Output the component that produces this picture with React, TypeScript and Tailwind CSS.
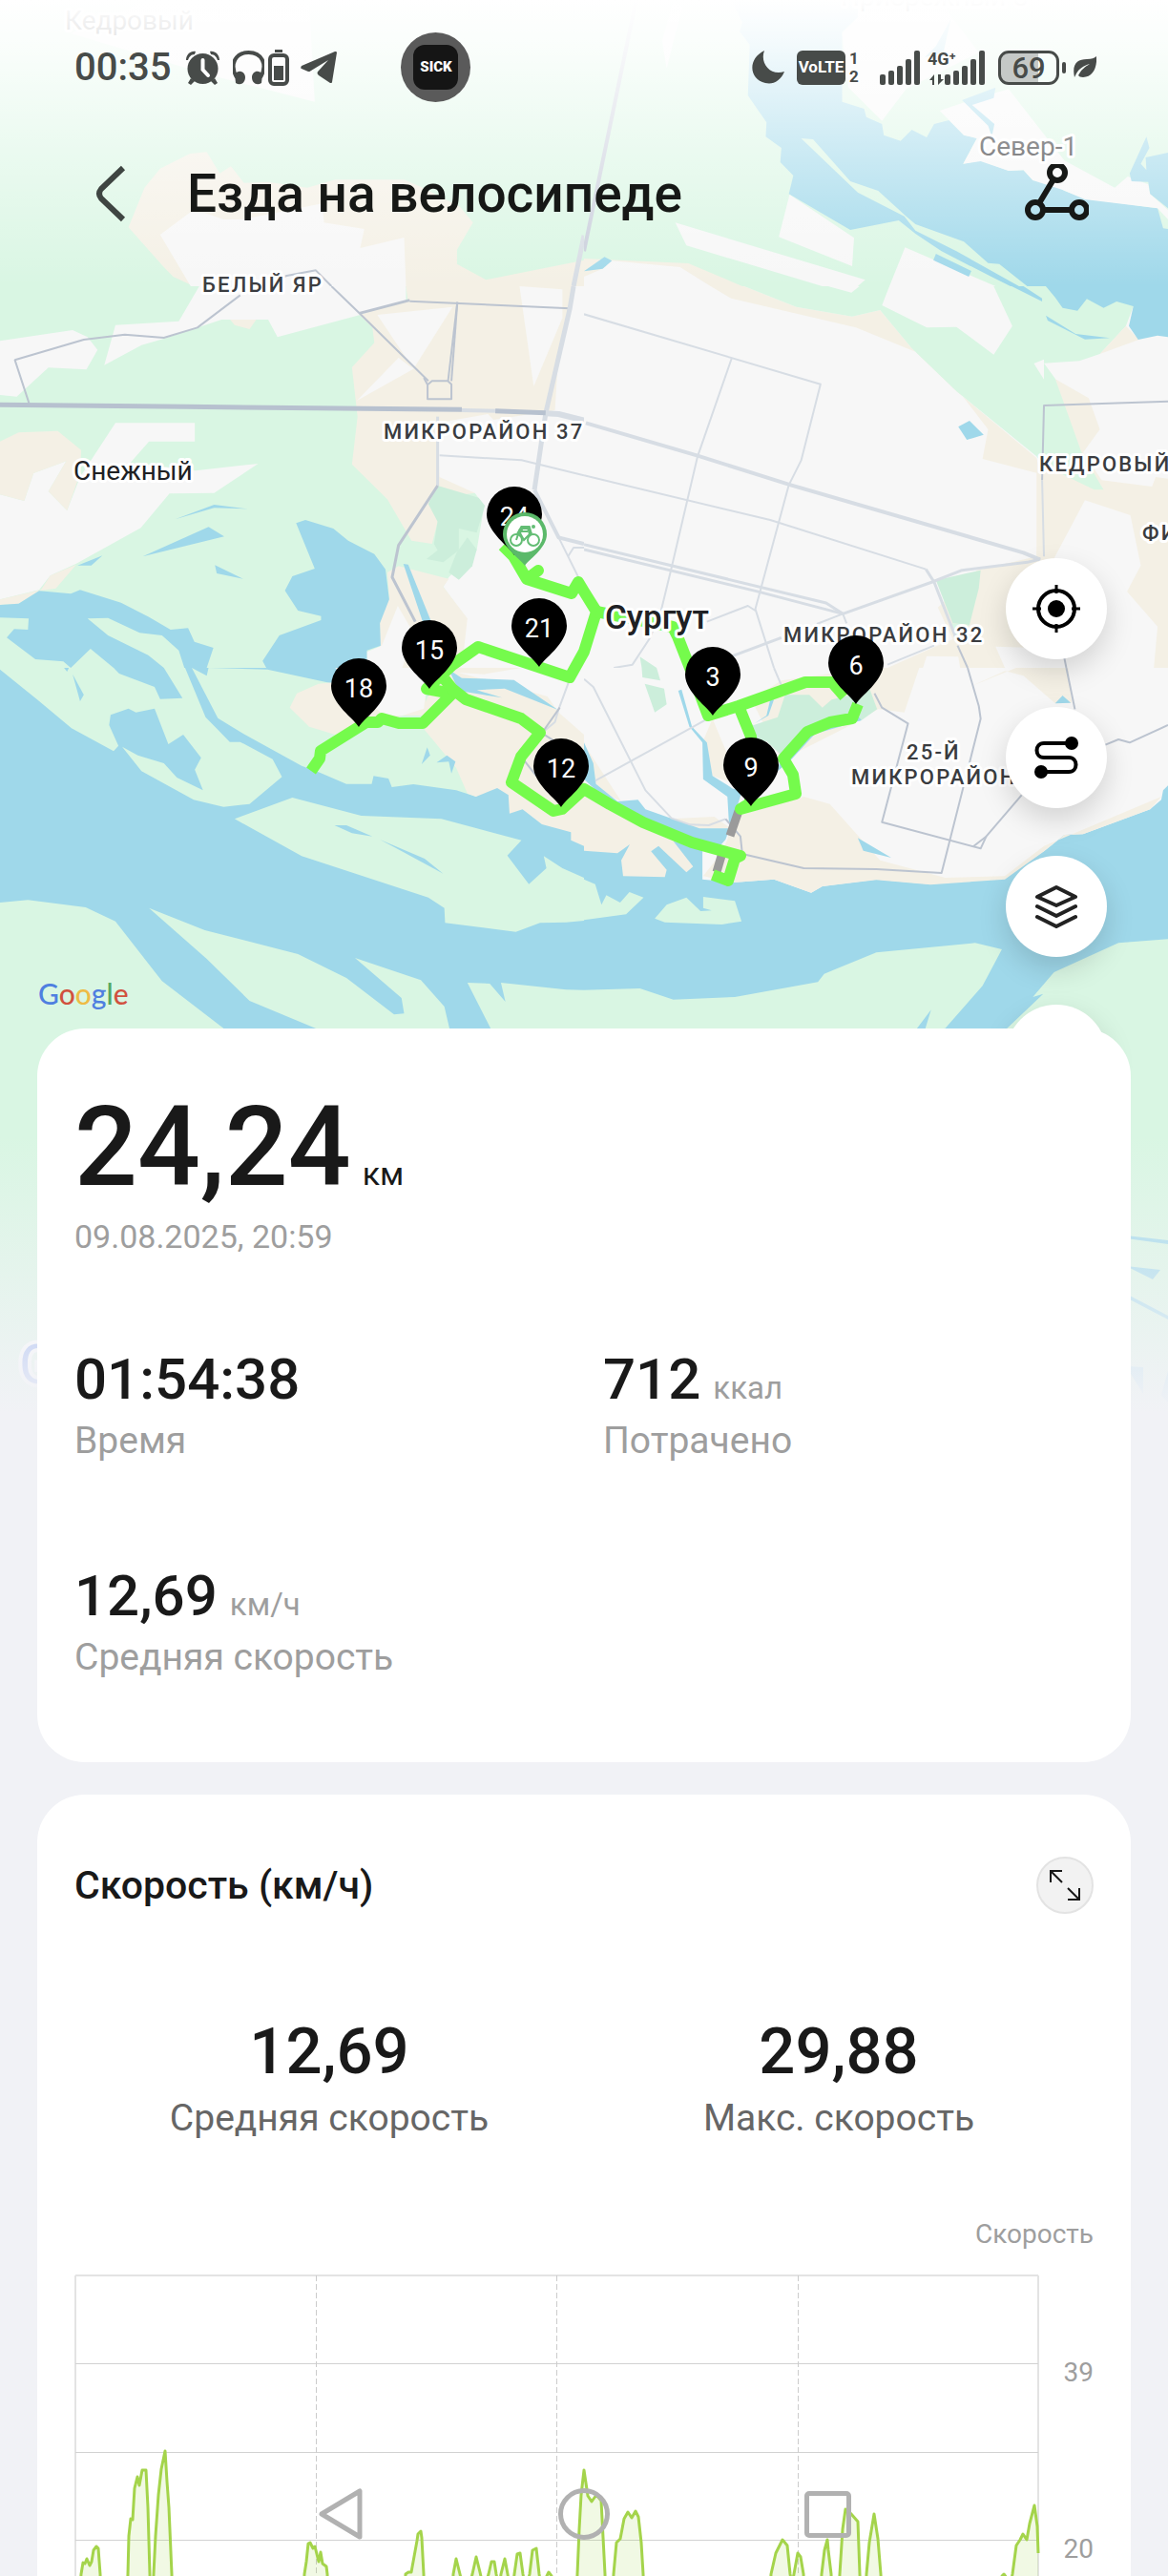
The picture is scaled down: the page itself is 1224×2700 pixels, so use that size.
import React from "react";

const GREEN = "#d9f6e3";
const LAND = "#f7f7f7";
const SAND = "#f4f0e5";
const WATER = "#9fd8ea";
const PARK = "#cceedb";
const ROAD = "#d7dde4";
const ROAD_DARK = "#bcc4d0";

type Shape = [fill: string, points: string];
type Road = [color: string, width: number, points: string];
type Tile = { x: number; y: number; h: number; base: string; shapes: Shape[]; roads: Road[] };

// Every tile covers 612 map units across; points use a finer 1568-unit grid, three units per map unit vertically.
const TILES: Tile[] = [
  {
    x: 0, y: 0, h: 300, base: GREEN,
    shapes: [
      [LAND, "190,105 400,0 830,0 845,320 560,235"],
      [SAND, "345,715 388,590 430,530 510,483 555,478 590,545 620,523 655,575 720,572 825,590 900,565 1085,565 1135,590 1235,650 1270,700 1227,785 1227,830 1305,880 1568,818 1568,900 520,900 465,870 440,840"],
      [LAND, "430,738 510,668 550,670 600,690 650,690 865,640 870,700 978,720 967,780 1085,747 1090,900 512,900"],
    ],
    roads: [
      [ROAD_DARK, 2, "740,880 770,867 848,850 890,900"],
      [ROAD, 5, "1568,740 1540,900"],
    ],
  },
  {
    x: 612, y: 0, h: 300, base: GREEN,
    shapes: [
      [LAND, "240,0 265,20 240,130 222,215 210,130"],
      [WATER, "395,0 735,0 735,55 693,100 693,320 752,342 758,368 800,390 805,425 850,443 880,408 920,432 940,390 980,378 1020,425 1055,435 1018,515 1065,505 1140,537 1180,535 1205,567 1250,570 1290,600 1345,625 1540,655 1555,718 1568,720 1568,900 1145,900 1090,868 960,790 890,735 845,693 715,723 550,610 562,552 527,510 530,465 488,430 490,385 440,300 445,140 418,100 425,70"],
      [GREEN, "583,435 615,438 715,570 790,600 865,680 890,705 1020,760 1085,827 1115,830 1190,900 1168,900 1000,790 890,725 860,680 735,605"],
      [LAND, "693,105 735,55 735,0 960,0 985,50 1060,165 865,280 800,380 710,275"],
      [WATER, "985,60 965,165 915,180 945,145"],
      [LAND, "955,348 1025,320 1140,280 1290,505 1425,590 1460,555 1515,580 1520,610 1568,660 1568,690 1540,655 1345,627 1285,597 1205,567 1180,535 1140,537 1065,507 1018,515 1055,435 1020,425"],
      [WATER, "1465,545 1510,430 1518,465 1495,515 1510,535 1508,495 1568,480 1568,655 1520,610 1515,572 1470,570"],
      [WATER, "1015,315 1105,275 1100,308 1042,330 1102,390 1095,430 1085,395"],
      [LAND, "552,612 725,748 720,837 523,745"],
      [LAND, "245,700 755,880 735,900 640,900 275,772"],
      [LAND, "862,778 1105,900 820,900"],
      [WATER, "945,798 1040,852 1033,870 938,818"],
      [SAND, "0,813 280,828 425,900 0,900"],
      [LAND, "0,870 50,845 75,820 258,840 340,900 0,900"],
      [WATER, "0,853 55,808 75,820 50,845"],
    ],
    roads: [["#c9cedb", 4, "140,0 0,790"]],
  },
  {
    x: 0, y: 300, h: 400, base: GREEN,
    shapes: [
      [LAND, "535,0 1090,0 1090,45 960,92 745,160 720,105 595,105 440,165 380,185 280,248 310,122 480,110"],
      [SAND, "1005,178 1000,130 965,90 1095,45 1090,0 1568,0 1568,600 1275,650 1150,670 1175,740 1160,810 1105,800 1040,670 945,560 960,410 945,255"],
      [LAND, "1013,90 1215,65 1110,260"],
      [LAND, "1070,225 1110,260 958,360"],
      [LAND, "1395,0 1510,10 1510,100 1433,315"],
      [LAND, "1175,430 1310,402 1325,420 1490,390 1500,200 1540,0 1568,0 1568,1200 1235,1200 1252,1045 1190,945 1205,915 1280,830 1300,690 1275,650 1180,600"],
      [PARK, "1175,627 1285,665 1302,690 1280,775 1232,762 1232,830 1190,868 1145,858 1175,830 1165,810 1175,740 1150,685"],
      [PARK, "1255,790 1280,828 1268,880 1232,923 1205,900 1225,840"],
      [SAND, "1070,880 1205,920 1190,945 1255,1045 1245,1150 1235,1200 1020,1200 1020,1050 1045,980 1040,900"],
      [LAND, "1068,1005 1110,1090 1080,1200 985,1200 985,1150 1025,1130"],
      [WATER, "1083,873 1096,875 1158,1055 1135,1055"],
      [LAND, "0,172 195,138 235,160 262,200 232,262 130,256 45,347 0,342"],
      [SAND, "618,105 688,105 670,135 630,122"],
      [LAND, "0,655 65,675 90,588 178,550 130,645 180,705 215,600 310,430 523,430 523,488 400,488 350,555 525,580 693,558 575,650 455,652 378,760 205,872 135,910 105,955 0,985"],
      [SAND, "0,488 50,460 155,455 218,515 215,590 180,705 130,645 178,550 90,588 65,675 0,655"],
      [SAND, "205,875 135,910 110,955 0,985 0,1002 50,998 105,958 150,950"],
      [WATER, "470,733 575,687 665,700 575,697"],
      [WATER, "383,850 560,757 602,787"],
      [WATER, "208,878 275,847 245,878"],
      [WATER, "577,877 653,920 582,903"],
      [WATER, "795,745 820,735 895,762 935,800 1005,842 1035,890 1045,985 1020,1060 1022,1130 985,1145 985,1200 715,1200 705,1178 750,1098 862,1050 862,1037 800,1020 765,957 785,912 845,888"],
      [WATER, "0,1002 50,998 105,958 190,967 215,955 325,995 400,1040 458,1080 505,1075 522,1118 573,1137 555,1200 495,1200 480,1145 435,1098 375,1090 290,1043 235,1045 290,1098 398,1160 440,1200 305,1200 243,1140 190,1200 170,1180 95,1173 18,1105 38,1078 75,1080 77,1045 0,1042"],
    ],
    roads: [
      [ROAD_DARK, 2, "78,368 40,232 225,168 335,152 440,162 530,130 645,28"],
      [ROAD_DARK, 2, "890,0 965,85 1150,298"],
      [ROAD_DARK, 3, "965,85 1100,44"],
      [ROAD_DARK, 2, "1100,47 1530,70"],
      [ROAD_DARK, 2, "1228,50 1203,298"],
      [ROAD_DARK, 2, "1228,50 1212,298"],
      [ROAD_DARK, 2, "1138,288 1148,310 1148,355 1212,355 1212,308 1202,298 1160,298 1148,310"],
      [ROAD, 2, "1180,532 1400,547 1568,595"],
      [ROAD, 3, "1175,410 1175,627"],
      [ROAD_DARK, 3, "1175,627 1070,815 1053,915 1115,1055"],
      [ROAD, 5, "1540,0 1530,70 1465,400 1435,640"],
      [ROAD, 4, "1435,640 1500,790 1568,810"],
      [ROAD, 2, "1500,790 1555,920"],
      [ROAD, 2, "1525,850 1540,822 1568,822"],
      [ROAD, 6, "1465,400 1500,402 1568,422"],
      ["#b7c1cf", 5, "0,373 500,379 1240,388"],
      [ROAD, 4, "1240,390 1340,392"],
      ["#b7c1cf", 5, "1330,392 1465,398"],
    ],
  },
  {
    x: 612, y: 300, h: 400, base: LAND,
    shapes: [
      [SAND, "340,0 430,0 570,65 720,95 795,75 880,195 1000,330 1215,540 1230,600 1232,860 1215,860 1215,587 1070,543 1085,450 940,230 730,130 395,38"],
      [SAND, "1232,560 1340,523 1390,610 1525,630 1535,600 1568,605 1568,1200 815,1200 940,1135 990,1110 950,1010 1055,893 1215,850"],
      [SAND, "1255,285 1355,352 1385,450 1340,523 1300,560"],
      [GREEN, "430,0 820,0 800,60 920,130 1000,128 1100,215 1150,125 1100,0 1568,0 1475,63 1455,125 1385,213 1330,235 1235,242 1265,290 1335,520 1395,640 1370,640 1230,560 1215,535 1000,330 880,195 795,75 720,95 570,65"],
      [LAND, "1208,243 1235,230 1235,293"],
      [LAND, "655,0 740,0 718,20"],
      [SAND, "1455,125 1490,168 1385,213"],
      [WATER, "1240,0 1265,35 1285,68 1325,77 1350,40 1395,68 1430,48 1475,63 1463,125 1488,168 1540,155 1568,160 1568,0"],
      [WATER, "1148,0 1180,0 1230,38 1230,48"],
      [WATER, "1240,92 1320,150 1412,163 1345,167 1245,108"],
      [LAND, "1345,673 1467,720 1495,878 1458,960 1540,1070 1530,1200 1290,1200 1260,860"],
      [LAND, "1105,1133 1290,1140 1320,1200 1130,1200"],
      [LAND, "920,1163 1005,1165 1010,1200 910,1200"],
      [PARK, "945,925 1065,893 1060,950 1035,1065 990,1060"],
      [GREEN, "985,1060 1035,1065 995,1110"],
      [PARK, "150,1165 195,1200 155,1200"],
      [WATER, "1035,423 1073,467 1028,483 1005,442"],
    ],
    roads: [
      [ROAD, 2, "0,88 635,308 583,548 550,625 475,950 460,1015 510,1200"],
      [ROAD, 2, "397,225 305,535 235,885 205,1030 175,1110 130,1190 80,1200"],
      [ROAD, 4, "5,430 305,533 555,625 1180,838 1225,860"],
      [ROAD, 2, "0,595 500,735 918,890"],
      [ROAD, 3, "918,890 940,930 1000,1110"],
      [ROAD, 3, "0,812 650,996 695,1030"],
      [ROAD, 3, "0,828 460,958 695,1030"],
      [ROAD, 2, "330,1055 440,1005 460,1020"],
      [ROAD, 2, "625,1062 695,1030 705,1060"],
      [ROAD, 3, "400,1162 530,1105"],
      [ROAD, 3, "695,1030 935,930 1015,893 1190,868 1225,858"],
      [ROAD, 2, "815,1190 940,1130"],
      [ROAD_DARK, 2, "1568,362 1235,375 1230,610"],
      [ROAD, 2, "1230,610 1235,850"],
      [ROAD_DARK, 2, "1003,1130 1030,1200"],
      [ROAD_DARK, 2, "1288,1160 1295,1200"],
    ],
  },
  {
    x: 0, y: 700, h: 400, base: WATER,
    shapes: [
      [GREEN, "0,5 100,100 192,190 305,262 318,245 293,180 297,148 345,128 365,140 415,128 452,240 492,210 540,283 523,320 545,385 475,345 440,300 370,275 328,248 380,325 520,415 600,437 670,428 757,343 732,287 645,233 617,233 552,155 497,0 440,0 490,95 430,98 415,60 320,18 305,0 185,0 180,12 172,0 0,0"],
      [WATER, "195,20 225,85 215,105"],
      [GREEN, "515,0 555,25 560,0 718,5 888,48 1140,60 1200,240 1310,375 1278,405 1225,385 1110,366 1052,375 1043,348 1003,340 998,365 930,365 860,330 810,308 650,205 585,158"],
      [SAND, "778,125 797,80 855,50 900,45 1140,30 1145,150 1080,150 900,210 830,185"],
      [SAND, "1135,130 1180,0 1568,0 1568,560 1533,542 1533,517 1455,492 1403,445 1368,458 1365,400 1335,378 1278,405 1255,395 1225,315 1140,195"],
      [LAND, "900,0 1180,0 1145,60 1138,128 1080,150 1030,150"],
      [LAND, "1230,15 1300,20 1400,0 1568,0 1568,210 1500,140 1470,90 1380,60"],
      [WATER, "1205,5 1240,32 1380,38 1498,132 1355,65 1280,70 1348,94 1232,72"],
      [WATER, "1147,250 1155,275 1132,303"],
      [WATER, "1172,298 1200,275 1223,295 1212,332 1205,295"],
      [GREEN, "630,475 785,408 970,465 1185,475 1400,542 1362,590 1420,680 1467,630 1460,592 1510,630 1568,660 1568,795 1520,800 1450,802 1385,830 1195,802 1193,755 1150,722 810,592"],
      [WATER, "898,495 930,495 1000,530 945,520"],
      [WATER, "1020,540 1140,600 1190,647 1060,565"],
      [GREEN, "0,738 75,730 230,753 310,797 435,985 600,1133 600,1200 0,1200"],
      [GREEN, "400,755 550,825 800,900 930,975 1058,1090 1085,1087 1078,1038 953,912 1130,982 1193,1065 1207,1135 850,1135 670,1047 555,915"],
      [GREEN, "1255,990 1315,993 1357,1050 1345,990 1520,1012 1568,1013 1568,1140 1320,1140"],
    ],
    roads: [
      [ROAD, 2, "1530,35 1500,130 1490,170 1455,205"],
      [ROAD_DARK, 2, "1503,125 1455,205 1568,290"],
      [ROAD_DARK, 2, "1400,280 1440,340"],
    ],
  },
  {
    x: 612, y: 700, h: 400, base: WATER,
    shapes: [
      [LAND, "0,0 1568,0 1568,370 1555,385 1550,415 1520,445 1340,523 1290,525 1235,577 1130,660 930,680 785,665 640,687 610,707 510,665 400,675 318,665 318,570 0,400"],
      [SAND, "0,240 100,420 30,380"],
      [SAND, "318,235 345,160 420,370 345,340"],
      [SAND, "230,475 350,468 400,510 310,510"],
      [SAND, "400,470 590,405 660,428 795,605 970,660 1130,655 1235,560 1550,405 1520,445 1340,523 1290,525 1235,577 1130,665 930,682 785,667 640,687 610,707 510,665 400,675 320,655 370,580 385,540"],
      [SAND, "450,100 530,40 770,0 900,0 860,140 790,130 700,190 530,290"],
      [SAND, "1035,60 1160,0 1300,0 1310,110 1265,112 1180,25 1130,10"],
      [PARK, "430,190 520,155 540,85 605,85 640,125 665,100 720,85 765,60 787,130 745,165 600,200 530,275 490,230 455,240"],
      [PARK, "155,0 195,0 205,40 157,30"],
      [PARK, "163,50 215,65 222,115 190,140"],
      [WATER, "0,235 25,300 32,365 90,420 145,415 165,445 310,505 390,505 385,405 320,350 318,235 283,185 253,72 262,68 290,185 330,235 345,340 400,380 425,385 405,460 380,540 365,560 300,545 180,485 60,415 0,350"],
      [WATER, "425,200 490,150 500,100 510,100 495,150 450,180"],
      [WATER, "530,270 600,200 735,150 745,165 620,208 555,290 520,325"],
      [SAND, "0,400 60,440 180,510 290,560 318,570 240,545 293,625 275,643 200,560 180,577 222,635 217,658 105,655 100,605 123,555 90,583 0,575"],
      [WATER, "735,535 825,597 750,575"],
      [WATER, "1285,87 1307,110 1265,112"],
      [GREEN, "0,665 30,680 47,745 60,715 97,738 122,705 160,722 113,775 0,793"],
      [GREEN, "190,788 222,745 275,722 313,765 343,763 320,755 320,720 405,733 423,797 370,807 217,800"],
      [GREEN, "0,1013 150,1008 240,1043 405,1035 628,988 645,962 785,895 1050,865 1122,885 1070,1000 970,1133 915,1140 932,1075 890,1140 0,1140"],
      [GREEN, "1568,853 1435,865 1262,957 1205,1035 1233,1025 1130,1140 1568,1200"],
    ],
    roads: [
      [ROAD, 2, "0,35 25,60 165,385 235,473 285,493 335,495 380,475"],
      [ROAD, 2, "30,355 340,155"],
      [ROAD, 2, "510,0 530,55"],
      [ROAD_DARK, 2, "380,475 420,530 425,585 590,630 785,633 960,645 1065,160 1060,120 1030,0"],
      [ROAD_DARK, 2, "780,80 800,125 870,175 800,485 1065,568 1080,530"],
      [ROAD_DARK, 2, "1045,562 1080,530 1175,400"],
      [ROAD_DARK, 2, "1295,0 1318,130"],
      [ROAD_DARK, 2, "1400,242 1435,225 1465,235 1568,180"],
    ],
  },
];

const ROUTES = [
  "527,572 538,583 552,607 564,598 552,607 599,622 606,610 612,620 625,641 612,683 597,710 558,697 501,678 474,697 447,722 474,727 443,758 418,758 400,753 396,757 384,757 336,787 335,795 326,808",
  "466,712 474,722 488,733 546,753 566,768 546,793 536,820 580,850 589,848 612,827 639,843 674,862 725,883 776,897 770,900 763,923 747,917",
  "625,641 705,657 710,667 723,700 742,750 774,740 844,715 872,715 885,730",
  "774,740 787,772 786,842 776,848 834,832 831,812 821,795 846,767 870,757 893,753 899,738",
];

const PINS: [string, number, number][] = [
  ["24", 539, 510], ["21", 565, 627], ["15", 450, 650], ["18", 376, 690],
  ["12", 588, 774], ["3", 747, 678], ["6", 897, 666], ["9", 787, 773],
];

function Label({ x, y, children, kind = "district" }: { x: number; y: number; children: React.ReactNode; kind?: "district" | "place" | "city" }) {
  const style =
    kind === "district"
      ? "text-[22px] font-medium tracking-widest fill-[#3a3c40]"
      : kind === "city"
        ? "text-[35px] font-medium fill-[#202124]"
        : "text-[28px] fill-[#202124]";
  return (
    <text x={x} y={y} className={`${style} stroke-white stroke-[6px] [paint-order:stroke] [stroke-linejoin:round]`}>
      {children}
    </text>
  );
}

function RouteMap() {
  return (
    <svg viewBox="0 0 1224 1480" className="absolute inset-x-0 top-0 w-full" aria-label="Карта маршрута">
      <defs>
        <linearGradient id="fadeTop" x1="0" y1="0" x2="0" y2="1">
          <stop offset="0" stopColor="#fff" />
          <stop offset="0.15" stopColor="#fff" stopOpacity="0.88" />
          <stop offset="0.5" stopColor="#fff" stopOpacity="0.5" />
          <stop offset="1" stopColor="#fff" stopOpacity="0" />
        </linearGradient>
        <linearGradient id="fadeBottom" x1="0" y1="0" x2="0" y2="1">
          <stop offset="0" stopColor="#f1f2f6" stopOpacity="0" />
          <stop offset="1" stopColor="#f1f2f6" />
        </linearGradient>
      </defs>
      <rect width="1224" height="1480" fill={GREEN} />
      {TILES.map((t) => (
        <svg key={`${t.x}-${t.y}`} x={t.x} y={t.y} width="612" height={t.h} viewBox={`0 0 1568 ${t.h * 3}`} preserveAspectRatio="none">
          <rect width="1568" height={t.h * 3} fill={t.base} />
          {t.shapes.map(([fill, points], i) => (
            <polygon key={i} fill={fill} points={points} />
          ))}
          {t.roads.map(([color, width, points], i) => (
            <polyline key={i} points={points} fill="none" stroke={color} strokeWidth={width} strokeLinejoin="round" vectorEffect="non-scaling-stroke" />
          ))}
        </svg>
      ))}
      <g fill={GREEN}><rect y="1078" width="1224" height="402" /></g>
      <g fill={WATER}>
        <polygon points="1180,1295 1224,1300 1224,1304 1180,1298" />
        <polygon points="1180,1327 1216,1331 1208,1341" />
        <polygon points="1180,1356 1224,1379 1224,1383 1180,1360" />
        <polygon points="1180,1432 1198,1433 1198,1461" />
        <polygon points="1224,1437 1217,1462 1224,1470" />
      </g>
      <g stroke="#9a9a9a" strokeWidth="9">
        <path d="M774 850 765 876M756 897 751 914" />
      </g>
      <g fill="none" stroke="#75fb4c" strokeWidth="12" strokeLinejoin="round">
        {ROUTES.map((points) => (
          <polyline key={points} points={points} />
        ))}
      </g>
      <Label x={881} y={6} kind="place">Прибрежный-3</Label>
      <Label x={68} y={31} kind="place">Кедровый</Label>
      <Label x={1026} y={163} kind="place">Север-1</Label>
      <Label x={212} y={306}>БЕЛЫЙ ЯР</Label>
      <Label x={402} y={460}>МИКРОРАЙОН 37</Label>
      <Label x={77} y={503} kind="place">Снежный</Label>
      <Label x={634} y={659} kind="city">Сургут</Label>
      <Label x={821} y={673}>МИКРОРАЙОН 32</Label>
      <Label x={1089} y={494}>КЕДРОВЫЙ</Label>
      <Label x={1197} y={566}>ФИ</Label>
      <Label x={950} y={796}>25-Й</Label>
      <Label x={892} y={822}>МИКРОРАЙОН</Label>
      {PINS.map(([label, x, y]) => (
        <g key={label} transform={`translate(${x} ${y})`}>
          <path d="M0 72C-4 64-29 48-29 29A29 29 0 0 1 29 29C29 48 4 64 0 72Z" fill="#000" />
          <text y="41" textAnchor="middle" className="fill-white text-[27px]">{label}</text>
        </g>
      ))}
      <g transform="translate(550 537)">
        <path d="M0 56C-3 50-23 38-23 23A23 23 0 0 1 23 23C23 38 3 50 0 56Z" fill="#5bb96a" />
        <circle cy="23" r="19" fill="#fff" />
        <g fill="none" stroke="#63bd74" strokeWidth="2">
          <circle cx="-9" cy="29" r="6" />
          <circle cx="9" cy="29" r="6" />
          <path d="M-9 29-6 20-1 29 7 21M-6 20H3" />
          <path d="M-7 23-3 16H4L6 23" strokeWidth="4" />
        </g>
        <circle cx="9" cy="15" r="2" fill="#63bd74" />
      </g>
      <text x="40" y="1053" className="font-[Lato] text-[30px] font-medium">
        <tspan fill="#4f7fe0">G</tspan><tspan fill="#d1513f">o</tspan><tspan fill="#eebb45">o</tspan><tspan fill="#4f7fe0">g</tspan><tspan fill="#55a863">l</tspan><tspan fill="#d1513f">e</tspan>
      </text>
      <text x="20" y="1450" className="fill-[#6f93f0] stroke-white stroke-[8px] text-[58px] [paint-order:stroke]">G</text>
      <rect width="1224" height="300" fill="url(#fadeTop)" />
      <rect y="1190" width="1224" height="290" fill="url(#fadeBottom)" />
    </svg>
  );
}

function SignalBars() {
  return (
    <svg viewBox="0 0 42 36" className="h-9 w-[42px]" fill="currentColor">
      <rect x="0" y="25" width="6" height="11" rx="2" />
      <rect x="9" y="21" width="6" height="15" rx="2" />
      <rect x="18" y="16" width="6" height="20" rx="2" />
      <rect x="27" y="9" width="6" height="27" rx="2" />
      <rect x="36" y="0" width="6" height="36" rx="2" />
    </svg>
  );
}

function StatusBar() {
  return (
    <div className="flex items-center justify-between pt-[34px] pr-[75px] pl-[78px] text-[#474b49]">
      <div className="flex h-[73px] items-center">
        <span className="text-[40px] leading-[48px] font-medium">00:35</span>
        <svg viewBox="0 0 35 36" className="ml-4 h-9 w-[35px]" fill="currentColor">
          <circle cx="17.500" cy="19" r="16" />
          <path d="M0 10C0 4 5 0 10 1L9 4C5 4 3 7 2 10ZM35 10C35 4 30 0 25 1L26 4C30 4 32 7 33 10ZM5 29 2 34 5 36 9 32ZM30 29 33 34 30 36 26 32Z" />
          <path d="M17.500 10V20L23 26" stroke="#fff" strokeWidth="4" fill="none" strokeLinecap="round" />
        </svg>
        <svg viewBox="0 0 33 36" className="ml-[14px] h-9 w-[33px]" fill="none">
          <path d="M4 28C-4 14 3 2 16.500 2S37 14 29 28" stroke="currentColor" strokeWidth="4" />
          <path d="M2 25C6 19 13 22 13 28C13 34 8 37 3 34ZM31 25C27 19 20 22 20 28C20 34 25 37 30 34Z" fill="currentColor" />
        </svg>
        <svg viewBox="0 0 22 38" className="ml-1 h-[38px] w-[22px]" fill="none">
          <rect x="2" y="6" width="18" height="30" rx="4" stroke="currentColor" strokeWidth="4" />
          <path d="M7 0H15V3H7ZM6 17H16V32H6Z" fill="currentColor" />
        </svg>
        <svg viewBox="0 0 38 33" className="ml-3 h-[33px] w-[38px]" fill="currentColor">
          <path d="M38 1C38 0 37 0 36 0L1 15C0 16 0 18 1 18L8 21C9 21 10 21 11 20L29 9 19 20C17 22 17 23 19 25L31 33C32 33 33 33 33 32Z" />
        </svg>
        <div className="ml-[67px] grid size-[73px] place-items-center rounded-full bg-[#5a5a5a]">
          <div className="grid size-[47px] place-items-center rounded-xl bg-[#151515] text-[15px] leading-none font-black text-white">SICK</div>
        </div>
      </div>
      <div className="flex items-center">
        <svg viewBox="0 0 34 35" className="h-[35px] w-[34px]" fill="currentColor">
          <path d="M13 0C8 13 19 27 34 22C30 32 22 36 14 34C-3 30-5 9 13 0Z" />
        </svg>
        <div className="ml-[13px] grid h-9 w-[51px] place-items-center rounded-md bg-current">
          <span className="text-[17px] leading-none font-bold text-white">VoLTE</span>
        </div>
        <div className="ml-1 w-3 text-[17px] leading-[19px] font-bold"><div>1</div><div>2</div></div>
        <div className="ml-5"><SignalBars /></div>
        <div className="-mr-4 ml-2 flex h-9 w-[34px] flex-col justify-between">
          <span className="text-[18px] leading-[17px] font-bold whitespace-nowrap">4G⁺</span>
          <svg viewBox="0 0 16 11" className="ml-[2px] h-[11px] w-4" fill="currentColor">
            <path d="M0 6 5 0V11H3V6ZM9 0V11L15 5H12V0Z" />
          </svg>
        </div>
        <SignalBars />
        <div className="ml-[14px] grid h-9 w-[64px] place-items-center rounded-[11px] border-[3px] border-current bg-linear-to-r from-[#c5c9c7] from-68% to-transparent to-68%">
          <span className="text-[31px] leading-none font-medium">69</span>
        </div>
        <div className="ml-[3px] h-3 w-[4px] rounded-sm bg-current" />
        <svg viewBox="0 0 24 23" className="ml-[8px] h-[23px] w-6" fill="currentColor">
          <path d="M24 0C25 12 20 22 10 22C7 22 6 21 5 20C8 14 12 11 17 8C10 10 6 13 3 18L1 22C-2 8 4 3 14 3C19 3 22 2 24 0Z" />
        </svg>
      </div>
    </div>
  );
}

function TitleBar() {
  return (
    <header className="flex items-center justify-between pt-14 pr-[82px] pl-[86px]">
      <div className="flex items-center gap-[50px]">
        <button aria-label="Назад" className="grid h-20 w-[60px] place-items-center text-[#3f4542]">
          <svg viewBox="0 0 32 60" className="h-[60px] w-8" fill="none" stroke="currentColor" strokeWidth="6">
            <path d="M29 3 6 25Q2 30 6 35L29 57" />
          </svg>
        </button>
        <h1 className="text-[55px] leading-[64px] font-medium text-[#161816]">Езда на велосипеде</h1>
      </div>
      <button aria-label="Маршрут" className="grid size-[70px] place-items-center text-[#161816]">
        <svg viewBox="0 0 68 62" className="h-[62px] w-[68px]" fill="none" stroke="currentColor" strokeWidth="6">
          <circle cx="35" cy="9" r="8" />
          <circle cx="12" cy="48" r="8" />
          <circle cx="58" cy="48" r="8" />
          <path d="M31 16 16 41M20 48H50" />
        </svg>
      </button>
    </header>
  );
}

function MapButton({ label, children }: { label: string; children?: React.ReactNode }) {
  return (
    <button aria-label={label} className="grid size-[106px] place-items-center rounded-full bg-white text-black shadow-[0_12px_30px_rgba(0,0,0,0.15)]">
      {children}
    </button>
  );
}

function MapButtons() {
  return (
    <div className="absolute top-[585px] right-16 flex flex-col gap-[50px]">
      <MapButton label="Моё местоположение">
        <svg viewBox="0 0 50 50" className="size-[50px]" fill="none" stroke="currentColor" strokeWidth="4">
          <circle cx="25" cy="25" r="19" />
          <circle cx="25" cy="25" r="9" fill="currentColor" stroke="none" />
          <path d="M25 0V9M25 41V50M0 25H9M41 25H50" strokeWidth="3" />
        </svg>
      </MapButton>
      <MapButton label="Начало и конец маршрута">
        <svg viewBox="0 0 46 44" className="h-11 w-[46px]" fill="none" stroke="currentColor" strokeWidth="4">
          <path d="M38 7H10C0 7 0 22 10 22H36C46 22 46 37 36 37H8" />
          <circle cx="39" cy="7" r="7" fill="currentColor" stroke="none" />
          <circle cx="7" cy="37" r="7" fill="currentColor" stroke="none" />
        </svg>
      </MapButton>
      <MapButton label="Слои карты">
        <svg viewBox="0 0 46 46" className="size-[46px] text-[#222]" fill="none" stroke="currentColor" strokeWidth="4" strokeLinecap="round" strokeLinejoin="round">
          <path d="M23 3 43 13 23 22 3 13ZM3 23 23 33 43 23M3 34 23 44 43 34" />
        </svg>
      </MapButton>
      <MapButton label="Ещё" />
    </div>
  );
}

function Stat({ value, unit, label }: { value: string; unit?: string; label: string }) {
  return (
    <div>
      <div className="text-[60px] leading-[72px] font-medium text-[#191919]">
        {value}
        {unit && <span className="ml-[13px] text-[33px] leading-none font-normal text-[#9e9e9e]">{unit}</span>}
      </div>
      <div className="mt-1 text-[39px] leading-[48px] text-[#9e9e9e]">{label}</div>
    </div>
  );
}

function SummaryCard() {
  return (
    <section className="rounded-[50px] bg-white px-[39px] pt-16 pb-[86px]">
      <div className="text-[116px] leading-[120px] font-medium text-[#191919]">
        24,24<span className="ml-3 text-[34px] leading-none font-normal">км</span>
      </div>
      <div className="mt-[14px] text-[34px] leading-[40px] text-[#9e9e9e]">09.08.2025, 20:59</div>
      <div className="mt-[94px] grid grid-cols-2 gap-x-10 gap-y-[103px]">
        <Stat value="01:54:38" label="Время" />
        <Stat value="712" unit="ккал" label="Потрачено" />
        <Stat value="12,69" unit="км/ч" label="Средняя скорость" />
      </div>
    </section>
  );
}

const SPEED =
  "0,462 5,340 7,314 9,302 11,303 13,298 16,305 18,301 20,289 23,285 25,287 27,314 32,462 50,462 56,314 57,274 59,256 61,257 63,224 66,212 68,221 71,205 75,205 77,244 79,314 81,380 83,314 85,274 88,231 91,204 95,185 97,217 99,244 102,314 106,462 236,462 241,314 243,301 245,282 247,281 250,287 252,285 256,301 258,291 260,303 264,306 265,314 270,462 342,462 347,314 350,312 353,312 359,279 360,272 363,269 364,276 366,314 370,462 390,462 397,314 400,298 404,314 410,340 417,314 421,296 425,312 429,330 434,314 437,301 440,301 442,314 445,330 447,314 451,298 454,314 458,340 461,314 464,293 467,292 470,314 473,330 477,314 480,289 484,287 487,314 491,340 495,316 497,312 500,316 505,462 522,462 527,314 529,267 531,231 534,205 538,232 542,238 547,231 552,237 556,314 560,440 565,314 568,281 572,277 576,256 580,249 584,255 588,248 591,254 594,281 596,314 602,462 722,462 730,314 735,292 742,278 747,284 750,314 752,325 754,314 758,292 761,296 764,314 770,462 777,462 783,314 786,289 789,278 790,289 793,314 797,440 802,314 805,267 808,246 814,251 821,259 823,314 827,400 830,314 833,281 838,251 842,277 845,314 852,462 965,462 972,316 974,314 977,318 980,330 983,314 987,284 991,278 994,272 998,278 1001,261 1006,242 1009,264 1010,292";

function SpeedChart() {
  return (
    <div className="mt-6 flex">
      <svg viewBox="0 0 1012 464" className="block min-w-0 flex-1" aria-label="График скорости">
        <g stroke="#d9d9d9" strokeWidth="1" shapeRendering="crispEdges">
          <path d="M1 1V463M1010 1V463M1 1H1010" stroke="#e3e3e3" strokeWidth="2" fill="none" />
          <path d="M1 93H1010M1 186H1010M1 278H1010M1 371H1010M1 463H1010" stroke="#d2d2d2" />
          <path d="M253 1V463M505 1V463M758 1V463" stroke="#cccccc" strokeDasharray="6 3" />
        </g>
        <polygon points={`${SPEED} 1010,462`} fill="#a4d44b" fillOpacity="0.15" />
        <polyline points={SPEED} fill="none" stroke="#a4d44b" strokeWidth="3" strokeLinejoin="round" />
      </svg>
      <div className="flex w-14 flex-col pt-[87px] text-right text-[28px] leading-8 text-[#9e9e9e]">
        <span className="h-[185px]">39</span>
        <span>20</span>
      </div>
    </div>
  );
}

function SpeedCard() {
  return (
    <section className="rounded-[50px] bg-white px-[39px] pt-[65px] pb-16">
      <div className="flex items-center justify-between">
        <h2 className="text-[41px] leading-[60px] font-medium text-[#191919]">Скорость (км/ч)</h2>
        <button aria-label="Развернуть" className="grid size-[60px] place-items-center rounded-full border-2 border-[#e3e3e3] bg-[#f2f2f2] text-[#191919]">
          <svg viewBox="0 0 34 34" className="size-[34px]" fill="none" stroke="currentColor" strokeWidth="2">
            <path d="M2 14V2H14M2 2 14 14M20 20 32 32M32 20V32H20" />
          </svg>
        </button>
      </div>
      <div className="mt-[104px] grid grid-cols-2 text-center">
        {[["12,69", "Средняя скорость"], ["29,88", "Макс. скорость"]].map(([value, label]) => (
          <div key={label}>
            <div className="text-[67px] leading-[80px] font-medium text-[#191919]">{value}</div>
            <div className="mt-[6px] text-[39px] leading-[48px] text-[#666]">{label}</div>
          </div>
        ))}
      </div>
      <div className="mt-20 text-right text-[28px] leading-9 text-[#9e9e9e]">Скорость</div>
      <SpeedChart />
    </section>
  );
}

function NavBar() {
  return (
    <nav className="absolute inset-x-0 bottom-0 flex h-[130px] items-center justify-center gap-[175px] text-[#b1b1b1]">
      <button aria-label="Назад" className="grid size-20 place-items-center">
        <svg viewBox="0 0 48 56" className="h-14 w-12" fill="none" stroke="currentColor" strokeWidth="5" strokeLinejoin="round">
          <path d="M44 4V52L4 28Z" />
        </svg>
      </button>
      <button aria-label="Главный экран" className="grid size-20 place-items-center">
        <span className="size-[54px] rounded-full border-[5px] border-current" />
      </button>
      <button aria-label="Недавние приложения" className="grid size-20 place-items-center">
        <span className="size-[49px] rounded-[5px] border-[5px] border-current" />
      </button>
    </nav>
  );
}

export default function App() {
  return (
    <div className="relative h-screen overflow-hidden bg-[#f1f2f6] font-[Roboto,sans-serif]">
      <main className="relative h-full overflow-y-auto [scrollbar-width:none]">
        <RouteMap />
        <MapButtons />
        <div className="relative min-h-[1078px]">
          <StatusBar />
          <TitleBar />
        </div>
        <div className="relative flex flex-col gap-[34px] px-[39px]">
          <SummaryCard />
          <SpeedCard />
        </div>
      </main>
      <NavBar />
    </div>
  );
}
